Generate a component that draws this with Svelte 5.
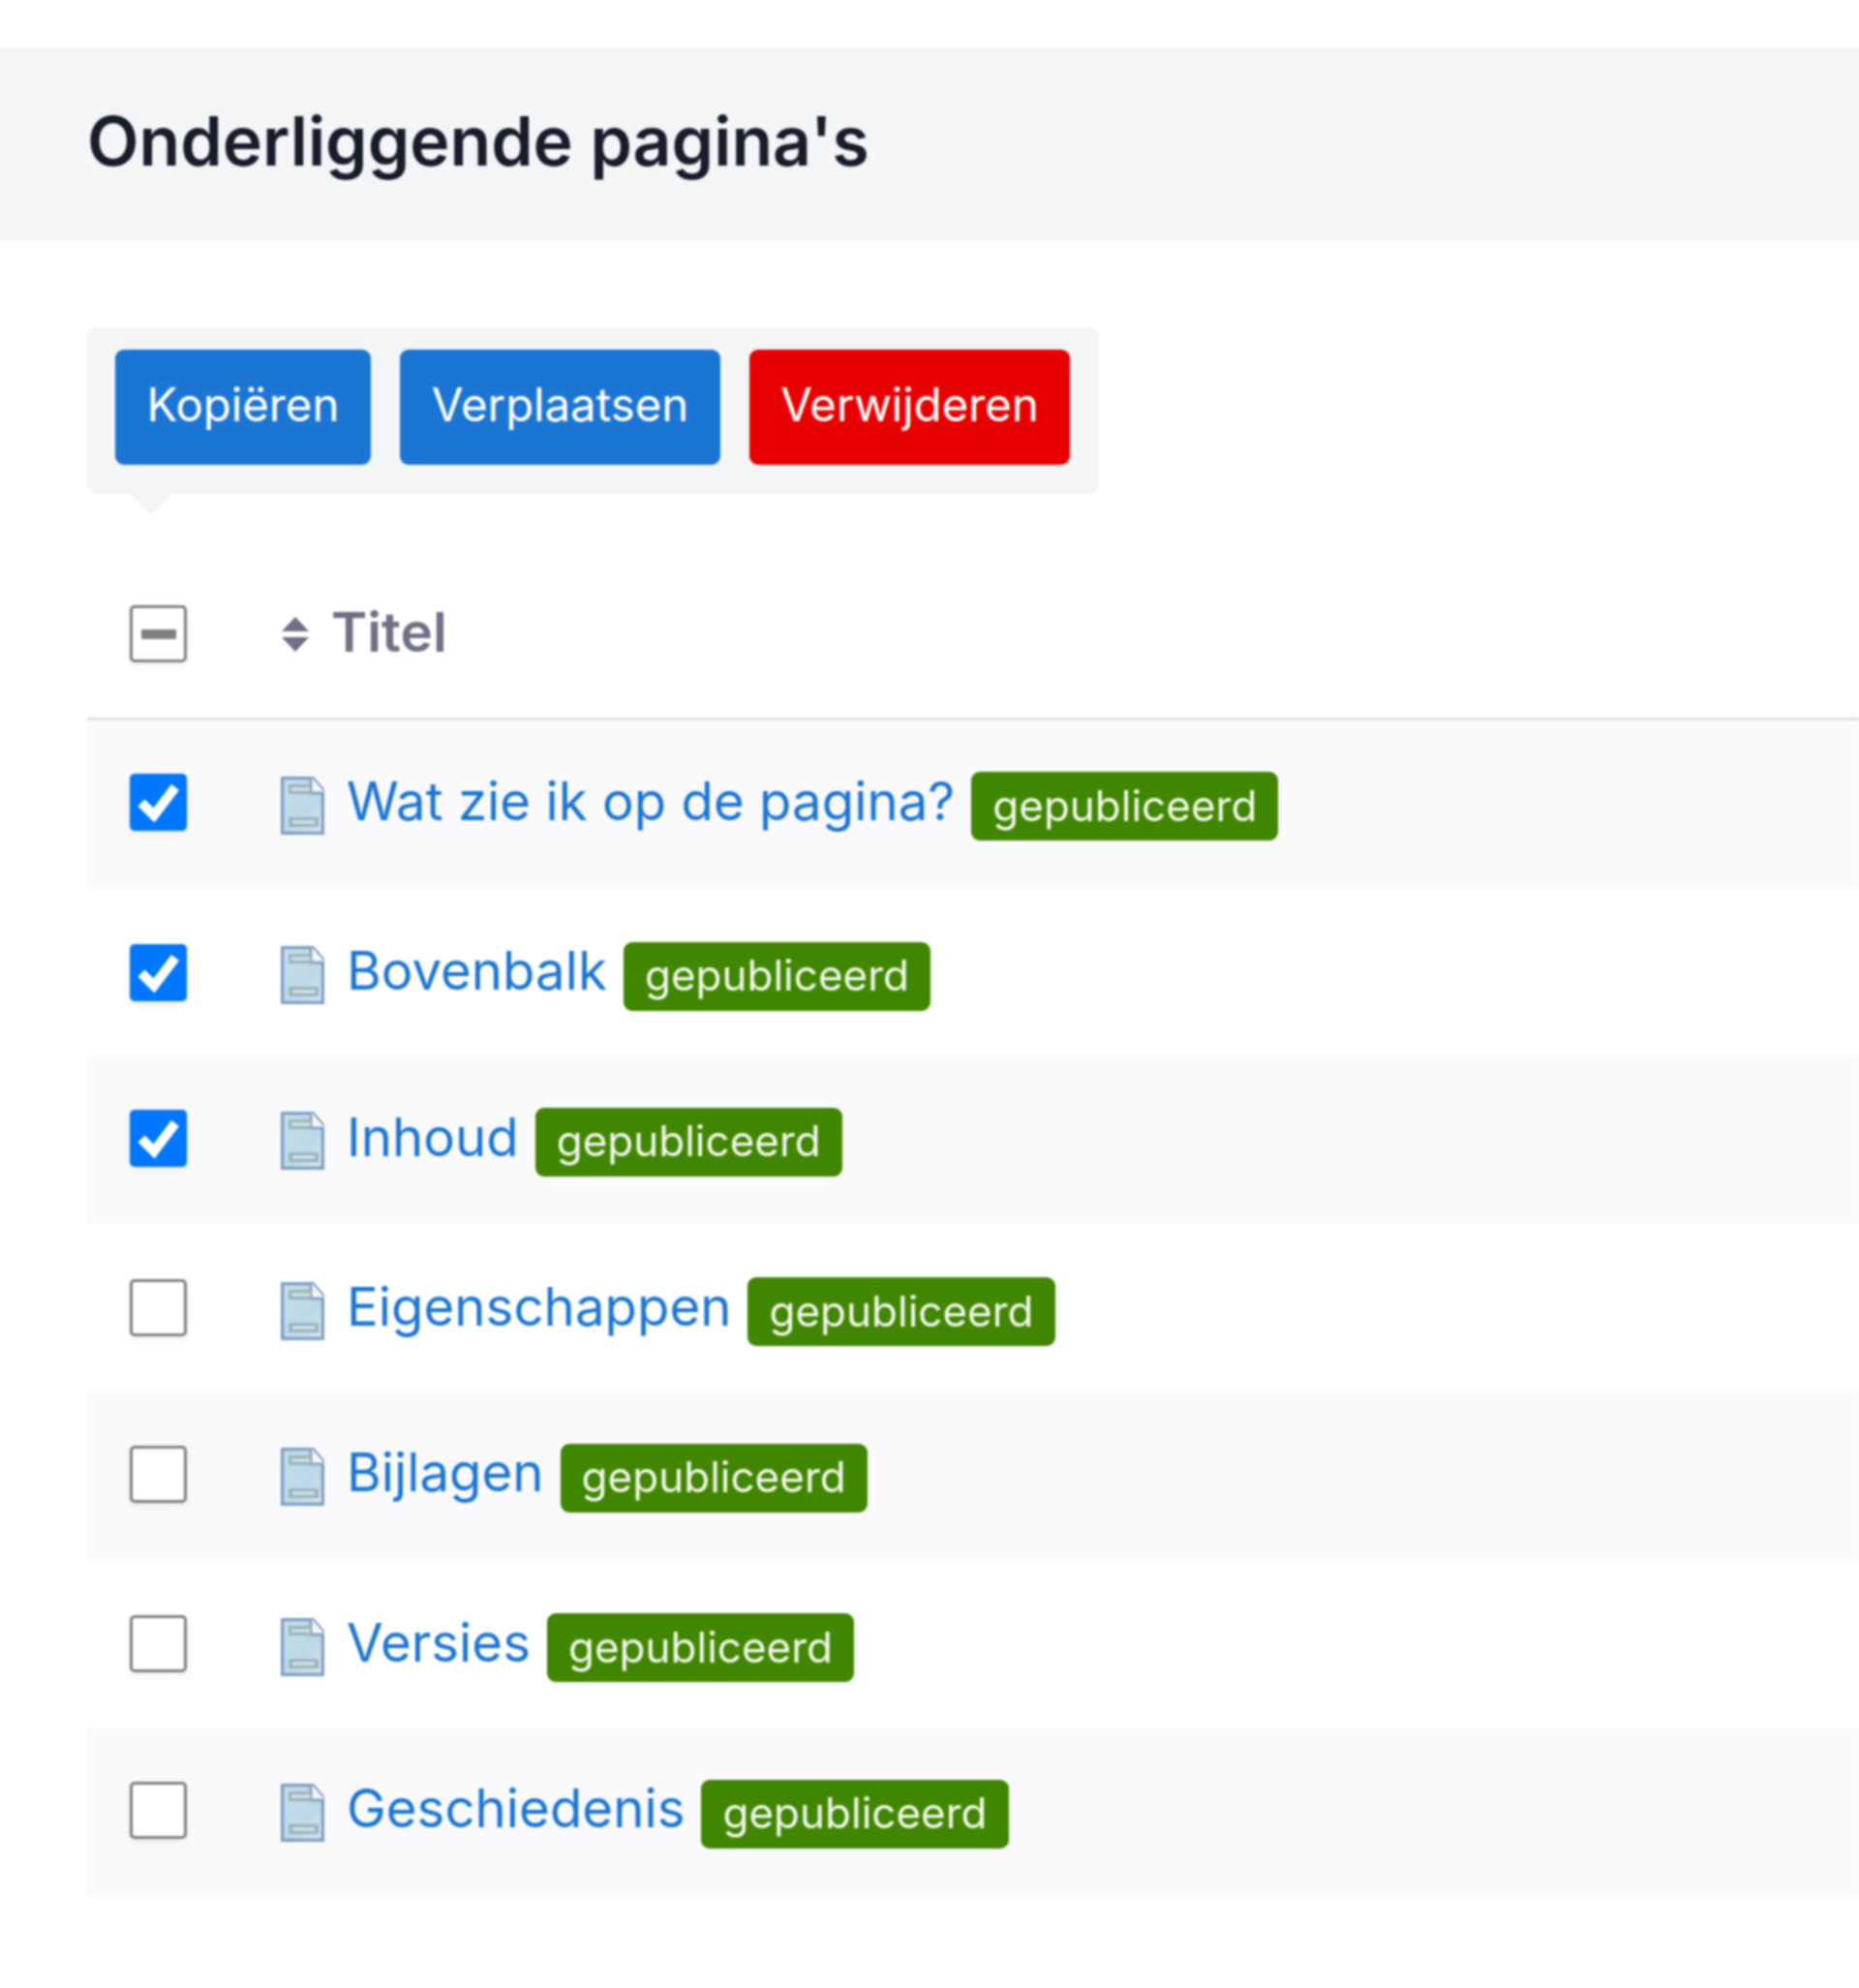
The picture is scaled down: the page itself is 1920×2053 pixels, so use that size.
<script>
  const rows = [
    { title: 'Wat zie ik op de pagina?', checked: true },
    { title: 'Bovenbalk', checked: true },
    { title: 'Inhoud', checked: true },
    { title: 'Eigenschappen', checked: false },
    { title: 'Bijlagen', checked: false },
    { title: 'Versies', checked: false },
    { title: 'Geschiedenis', checked: false }
  ];
</script>

<div class="page">
  <header class="head"><h1>Onderliggende pagina's</h1></header>
  <main class="body">
    <div class="bar">
      <button class="btn blue copy">Kopiëren</button>
      <button class="btn blue move">Verplaatsen</button>
      <button class="btn red del">Verwijderen</button>
    </div>
    <div class="table">
      <div class="thead">
        <span class="box"><span class="dash"></span></span>
        <span class="sort">
          <svg viewBox="0 0 30 36" width="30" height="36"><path d="M15 0 L29 15 H1 Z M1 21 H29 L15 36 Z" fill="#6f6f85"/></svg>
        </span>
        <span class="th">Titel</span>
      </div>
      {#each rows as r, i}
        <div class="row" class:odd={i % 2 === 0}>
          {#if r.checked}
            <span class="box on">
              <svg viewBox="0 0 59 59" width="59" height="59"><path d="M12 30 L25 43 L47 14" fill="none" stroke="#fff" stroke-width="10"/></svg>
            </span>
          {:else}
            <span class="box"></span>
          {/if}
          <svg class="doc" viewBox="0 0 45 60" width="45" height="60">
            <defs>
              <linearGradient id={'g' + i} x1="0" y1="0" x2="1" y2="1">
                <stop offset="0" stop-color="#c4deeb"/>
                <stop offset="0.6" stop-color="#bcd8e8"/>
                <stop offset="1" stop-color="#d8e4ee"/>
              </linearGradient>
            </defs>
            <path d="M1.5 1.5 H33 L43.5 14 V58.5 H1.5 Z" fill={'url(#g' + i + ')'} stroke="#7f9fc6" stroke-width="3.5"/>
            <path d="M32 1 V16 H45 Z" fill="#f6f7fb"/>
            <path d="M31 2 V17 H44.5" fill="none" stroke="#8da2bc" stroke-width="3"/>
            <rect x="8" y="8" width="23" height="10" fill="#9db4c0"/>
            <rect x="11" y="11.5" width="19" height="3" fill="#d7e7ec"/>
            <rect x="8" y="42" width="31" height="10" fill="#9db4c0"/>
            <rect x="12" y="45.5" width="23" height="3" fill="#d7e7ec"/>
          </svg>
          <a class="link" href="#top">{r.title}</a>
          <span class="badge">gepubliceerd</span>
        </div>
      {/each}
    </div>
  </main>
</div>

<style>
  :global(body) { margin: 0; background: #fff; }
  .page {
    height: 2053px;
    padding-top: 49px;
    box-sizing: border-box;
    font-family: Inter, "Liberation Sans", sans-serif;
    overflow: hidden;
    filter: blur(1.1px);
  }
  .head {
    height: 200px;
    background: #f4f5f7;
    padding-left: 90px;
    display: flex;
    align-items: center;
  }
  h1 {
    margin: 0 0 6px;
    font-size: 69.7px;
    font-weight: 600;
    color: #171c2b;
    line-height: 1;
  }
  .body { padding: 89px 0 0 90px; }
  .bar {
    position: relative;
    width: 1045px;
    height: 172px;
    box-sizing: border-box;
    padding: 23px 29px;
    background: #f4f5f7;
    border-radius: 10px;
    display: flex;
    gap: 30px;
  }
  .bar::after {
    content: "";
    position: absolute;
    left: 44px;
    top: 100%;
    border: 22px solid transparent;
    border-top-color: #f4f5f7;
    border-bottom: 0;
  }
  .btn {
    height: 119px;
    border: 0;
    border-radius: 9px;
    color: #fff;
    font: 400 47.3px Inter, "Liberation Sans", sans-serif;
    padding: 0 0 6px;
  }
  .copy { width: 264px; }
  .move { width: 331px; }
  .del { width: 331px; }
  .blue { background: #1b75d3; }
  .red { background: #e60000; }
  .table { margin-top: 58px; }
  .thead {
    height: 173px;
    border-bottom: 3px solid #e1e2e7;
    display: flex;
    align-items: center;
    padding-left: 44px;
  }
  .box {
    flex: none;
    width: 59px;
    height: 59px;
    box-sizing: border-box;
    border: 3.5px solid #808080;
    border-radius: 5px;
    background: #fff;
    display: flex;
    align-items: center;
    justify-content: center;
    box-shadow: 0 3px 7px rgba(0, 0, 0, 0.07);
  }
  .box.on { border: 0; background: #0077fc; }
  .dash { width: 36px; height: 10px; background: #7f7f84; border-radius: 1px; }
  .sort { margin-left: 97px; display: flex; }
  .th {
    margin: 0 0 2px 22px;
    font-size: 56.5px;
    font-weight: 600;
    color: #6f6f85;
    line-height: 1;
  }
  .row {
    height: 173.4px;
    box-sizing: border-box;
    display: flex;
    align-items: center;
    padding-left: 44px;
    white-space: nowrap;
  }
  .row.odd { background: #fafafc; padding-bottom: 4px; }
  .doc { margin-left: 97px; margin-top: 6px; flex: none; }
  .link {
    margin: 0 0 3px 23px;
    font-size: 54.6px;
    color: #1b75d3;
    text-decoration: none;
    line-height: 1;
  }
  .badge {
    margin: 8px 0 0 17px;
    height: 71px;
    box-sizing: border-box;
    padding: 0 22px 2px;
    background: #418600;
    color: #f2f8ec;
    border-radius: 9px;
    font-size: 44px;
    display: flex;
    align-items: center;
  }
</style>
